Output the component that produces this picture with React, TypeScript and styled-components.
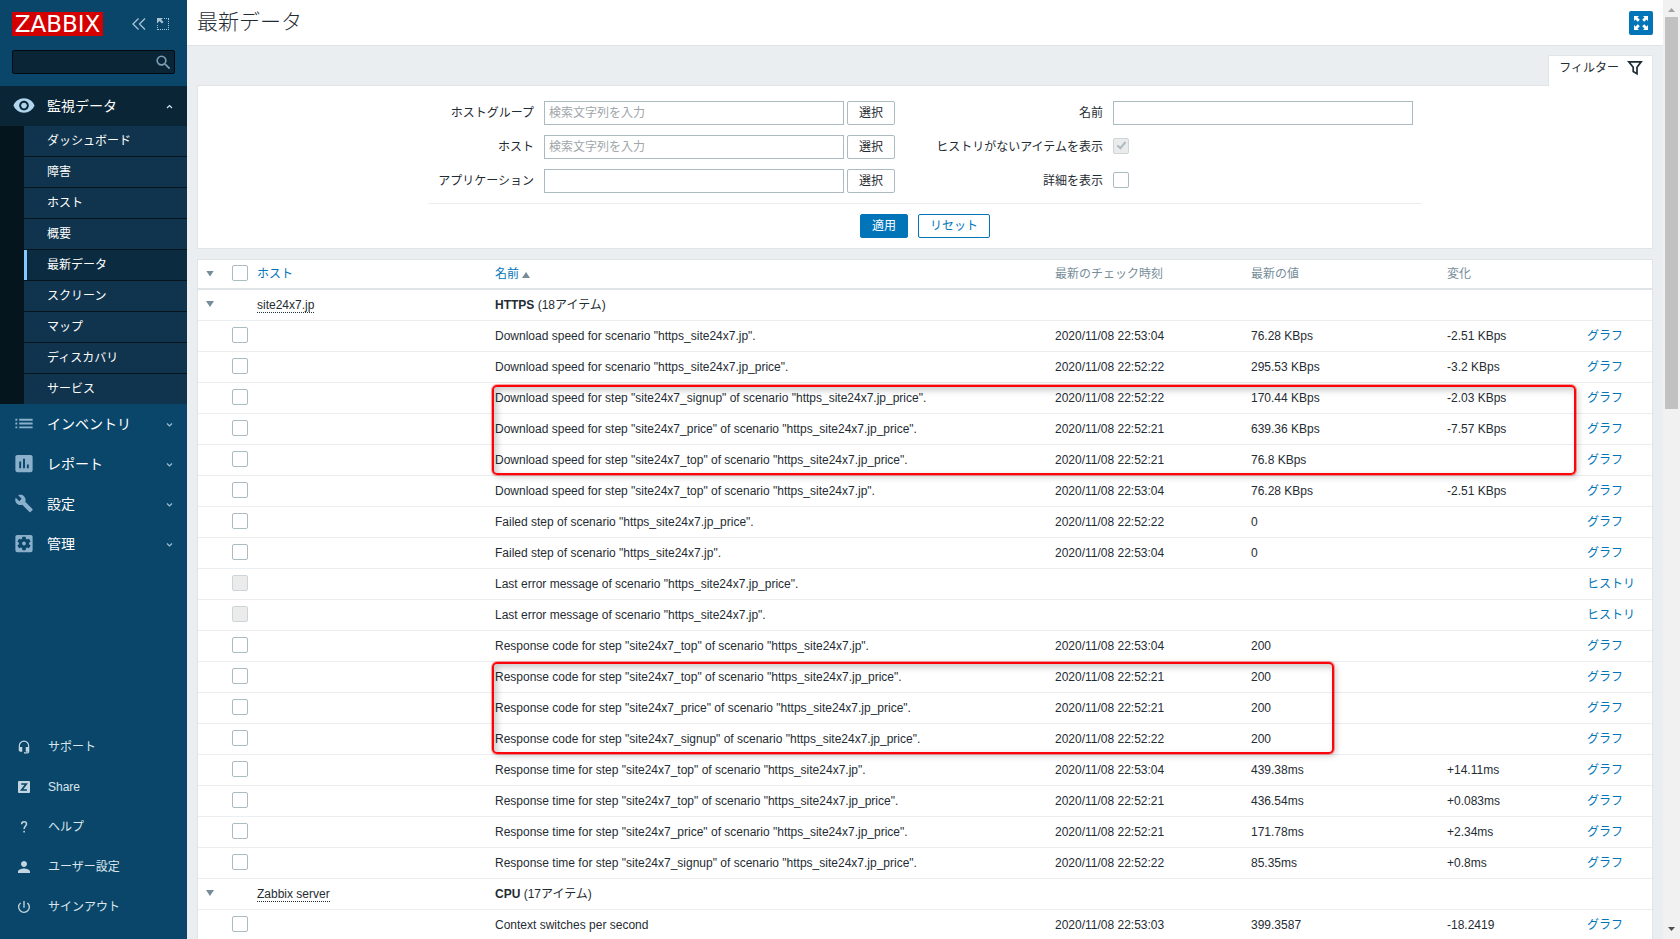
import React from 'react';
import styled, { createGlobalStyle, css } from 'styled-components';
import {
  MdVisibility,
  MdList,
  MdAssessment,
  MdBuild,
  MdSettingsApplications,
  MdHeadsetMic,
  MdPerson,
  MdPowerSettingsNew,
  MdSearch,
} from 'react-icons/md';

const GlobalStyle = createGlobalStyle`
  *, *::before, *::after { box-sizing: border-box; }
  body {
    margin: 0;
    background: #ebeef0;
    color: #1f2c33;
    font-family: "Liberation Sans", Arial, "Noto Sans CJK JP", sans-serif;
    font-size: 12px;
    line-height: 16px;
  }
  button, input { font: inherit; color: inherit; }
  a { color: #0275b8; text-decoration: none; }
  ul { list-style: none; margin: 0; padding: 0; }
`;

const Shell = styled.div`
  display: flex;
  height: 100vh;
  overflow: hidden;
`;

/* ---------- sidebar ---------- */

const Sidebar = styled.aside`
  flex: none;
  width: 187px;
  display: flex;
  flex-direction: column;
  background: #0a466a;
`;

const SidebarHead = styled.div`
  display: flex;
  align-items: center;
  padding: 12px 18px 14px 12px;
`;

const Logo = styled.a`
  width: 91px;
  height: 24px;
  margin-right: auto;
  background: #d40000;
  color: #fff;
  font-family: "DejaVu Sans", sans-serif;
  font-size: 23px;
  line-height: 24px;
  text-align: center;
  white-space: nowrap;
`;

const HeadButton = styled.button`
  display: flex;
  padding: 0;
  margin-left: 11px;
  border: 0;
  background: none;
  color: #a9c4d5;
`;

const SearchForm = styled.form`
  display: flex;
  align-items: center;
  height: 24px;
  margin: 0 12px 12px;
  border: 1px solid #020b11;
  border-radius: 2px;
  background: #0a2536;
  input {
    flex: 1;
    min-width: 0;
    border: 0;
    background: none;
    outline: none;
    color: #fff;
  }
  button {
    display: flex;
    padding: 0 1px;
    border: 0;
    background: none;
    color: #7d9fb4;
  }
`;

const MenuLink = styled.a<{ $open?: boolean }>`
  display: flex;
  align-items: center;
  height: 40px;
  padding: 0 14px 0 12px;
  color: #fff;
  font-size: 14px;
  line-height: 20px;
  background: ${(p) => (p.$open ? '#0a2536' : 'transparent')};
  > svg:first-child {
    width: 24px;
    margin-right: 11px;
    padding-bottom: 1px;
    color: ${(p) => (p.$open ? '#b0d5ee' : '#8bb0cc')};
  }
  > svg:last-child {
    margin-left: auto;
    color: ${(p) => (p.$open ? '#d4e4ee' : '#9fbfd3')};
  }
`;

const SubMenu = styled.ul`
  padding-left: 24px;
  background: #04151e;
  li + li { border-top: 1px solid #04151e; }
`;

const SubLink = styled.a<{ $active?: boolean }>`
  display: block;
  height: 30px;
  padding-left: ${(p) => (p.$active ? '20px' : '23px')};
  color: #fff;
  line-height: 31px;
  background: #10344d;
  ${(p) => p.$active && css`
    border-left: 3px solid #83c9ff;
    background: #0b2c40;
  `}
`;

const FooterMenu = styled.ul`
  margin-top: auto;
  padding-bottom: 12px;
`;

const FooterLink = styled.a`
  display: flex;
  align-items: center;
  height: 40px;
  padding-left: 15px;
  gap: 15px;
  color: #dbe6ed;
`;

const FooterIcon = styled.span`
  display: flex;
  justify-content: center;
  width: 18px;
  color: #c3d5e0;
`;

/* ---------- page ---------- */

const Page = styled.main`
  flex: 1;
  min-width: 0;
  overflow: hidden;
`;

const PageHead = styled.header`
  display: flex;
  justify-content: space-between;
  align-items: center;
  height: 46px;
  padding: 0 10px;
  background: #fff;
  border-bottom: 1px solid #dfe4e7;
`;

const Title = styled.h1`
  margin: 0;
  padding-bottom: 2px;
  font-size: 21px;
  line-height: 24px;
  font-weight: 300;
`;

const KioskButton = styled.button`
  display: flex;
  align-items: center;
  justify-content: center;
  width: 24px;
  height: 24px;
  padding: 0;
  border: 0;
  border-radius: 2px;
  background: #0275b8;
`;

const Content = styled.div`
  padding: 9px 10px 0;
`;

const TabBar = styled.div`
  display: flex;
  justify-content: flex-end;
`;

const FilterTab = styled.a`
  position: relative;
  z-index: 1;
  display: flex;
  gap: 8px;
  height: 31px;
  margin-bottom: -1px;
  padding: 4px 9px 0 10px;
  border: 1px solid #dfe4e7;
  border-bottom: 0;
  background: #fff;
  color: #1f2c33;
`;

const FilterPanel = styled.form`
  display: flex;
  flex-direction: column;
  align-items: center;
  margin-bottom: 10px;
  padding: 15px 0 10px;
  border: 1px solid #dfe4e7;
  background: #fff;
`;

const FilterFields = styled.div`
  display: flex;
  gap: 40px;
  padding: 0 9px 10px 10px;
  border-bottom: 1px solid #ebeef0;
`;

const FieldColumn = styled.div<{ $label: number }>`
  display: grid;
  grid-template-columns: ${(p) => p.$label}px auto;
  grid-auto-rows: 24px;
  gap: 10px;
  align-items: center;
  > label { text-align: right; white-space: nowrap; }
`;

const FieldControl = styled.div`
  display: flex;
  gap: 3px;
`;

const TextInput = styled.input`
  width: 300px;
  height: 24px;
  padding: 0 4px;
  border: 1px solid #acbbc2;
  border-radius: 0;
  background: #fff;
  outline: none;
  &::placeholder { color: #a0a6a9; opacity: 1; }
`;

const Button = styled.button<{ $kind: 'plain' | 'primary' | 'outline' }>`
  height: 24px;
  min-width: 48px;
  padding: 0 11px;
  border: 1px solid;
  border-radius: 2px;
  white-space: nowrap;
  ${(p) => p.$kind === 'plain' && css`
    width: 48px; padding: 0; border-color: #acbbc2; background: #fff; color: #1f2c33;
  `}
  ${(p) => p.$kind === 'primary' && css`
    border-color: #0275b8; background: #0275b8; color: #fff;
  `}
  ${(p) => p.$kind === 'outline' && css`
    border-color: #0275b8; background: #fff; color: #0275b8;
  `}
`;

const FilterActions = styled.div`
  display: flex;
  gap: 10px;
  margin-top: 10px;
`;

const Checkbox = styled.input.attrs({ type: 'checkbox' })`
  appearance: none;
  display: block;
  width: 16px;
  height: 16px;
  margin: 0 0 2px;
  border: 1px solid #acbbc2;
  border-radius: 2px;
  background: #fff;
  &:disabled { background: #ebebeb; border-color: #ccd5d9; }
  &:checked::after {
    content: '';
    display: block;
    width: 5px;
    height: 9px;
    margin: 1px auto 0;
    border: solid #acbbc2;
    border-width: 0 2px 2px 0;
    transform: rotate(40deg);
  }
`;

const TableWrap = styled.div`
  position: relative;
  border: 1px solid #dfe4e7;
  background: #fff;
`;

const DataTable = styled.table`
  width: 100%;
  table-layout: fixed;
  border-collapse: separate;
  border-spacing: 0;
  th, td {
    padding: 0 5px;
    text-align: left;
    font-weight: 400;
    white-space: nowrap;
    vertical-align: middle;
  }
  th {
    height: 30px;
    padding-bottom: 1px;
    border-bottom: 2px solid #dfe4e7;
    color: #768d99;
  }
  td {
    height: 31px;
    border-bottom: 1px solid #ebeef0;
  }
  th:first-child, td:first-child { padding-left: 8px; }
`;

const Col = styled.col<{ $w?: number }>`
  width: ${(p) => (p.$w ? `${p.$w}px` : 'auto')};
`;

const Toggle = styled.button`
  display: block;
  width: 8px;
  height: 6px;
  padding: 0;
  margin: 0;
  border: 0;
  background: #768d99;
  clip-path: polygon(0 0, 100% 0, 50% 100%);
  td > & { margin-bottom: 2px; }
`;

const SortUp = styled.span`
  display: inline-block;
  margin-left: 3px;
  border: solid transparent;
  border-width: 0 4px 6px;
  border-bottom-color: #768d99;
`;

const HostLink = styled.a`
  border-bottom: 1px dotted #1f2c33;
  color: #1f2c33;
`;

const Highlight = styled.div<{ $top: number; $right: number; $height: number }>`
  position: absolute;
  left: 294px;
  top: ${(p) => p.$top}px;
  right: ${(p) => p.$right}px;
  height: ${(p) => p.$height}px;
  border: 2px solid #fa0509;
  border-radius: 5px;
  box-shadow:
    0 0 0 1px rgba(250, 5, 9, 0.35),
    2px 2px 6px rgba(0, 0, 0, 0.2),
    inset 3px 3px 7px rgba(0, 0, 0, 0.22);
  pointer-events: none;
`;

/* ---------- window scroll bar ---------- */

const ScrollTrack = styled.div`
  flex: none;
  width: 17px;
  display: flex;
  flex-direction: column;
  align-items: center;
  padding: 8px 0;
  background: #f1f1f1;
`;

const ScrollThumb = styled.div`
  width: 13px;
  height: 42.5%;
  margin: 5px 0 auto;
  background: #c1c1c1;
`;

/* ---------- icons ---------- */

const Chevron = ({ up }: { up?: boolean }) => (
  <svg width="7" height="5" viewBox="0 0 7 5" fill="none" stroke="currentColor" strokeWidth="1.2">
    <path d={up ? 'M1 4 3.500 1.500 6 4' : 'M1 1.500 3.500 4 6 1.500'} />
  </svg>
);

const CollapseIcon = () => (
  <svg width="14" height="12" viewBox="0 0 14 12" fill="none" stroke="currentColor" strokeWidth="1.3">
    <path d="M6.5.5 1 6l5.500 5.500M13 .5 7.500 6 13 11.500" />
  </svg>
);

const CompactIcon = () => (
  <svg width="12" height="12" viewBox="0 0 12 12" fill="currentColor">
    <path d="M0 0h6L4.200 1.800 6.500 4.100 5 5.500 2.500 3.100 0 5.500z" />
    <path d="M7 .5h5M11.500 1v11M.5 7v5M1 11.500h11" fill="none" stroke="currentColor" strokeDasharray="1 1" />
  </svg>
);

const ShareIcon = () => (
  <svg width="12" height="12" viewBox="0 0 12 12">
    <rect width="12" height="12" rx="1" fill="currentColor" />
    <path d="M3.200 3h5L3.700 9h5.200" fill="none" stroke="#0a466a" strokeWidth="1.700" />
  </svg>
);

const HelpIcon = () => (
  <svg width="14" height="14" viewBox="0 0 14 14" fill="none" stroke="currentColor" strokeWidth="1.500">
    <path d="M4.600 4.200C4.700 2.600 5.700 1.700 7.100 1.700c1.500 0 2.400.9 2.400 2.200 0 2-2.400 2.200-2.400 5.100M7.100 10.800v1.700" />
  </svg>
);

const KioskIcon = () => (
  <svg width="14" height="14" viewBox="0 0 14 14" fill="#fff">
    {[0, 90, 180, 270].map((angle) => (
      <path key={angle} transform={`rotate(${angle} 7 7)`} d="M0 0h5L3.500 1.500 5.800 3.800 3.800 5.800 1.500 3.500 0 5z" />
    ))}
  </svg>
);

const FunnelIcon = () => (
  <svg width="16" height="16" viewBox="0 0 16 16" fill="none" stroke="#1f2c33" strokeWidth="1.700">
    <path d="M1.800 1.800h12.400L10 7.300v6.500L6.200 11.500V7.300z" />
  </svg>
);

/* ---------- data ---------- */

const subMenu = ['ダッシュボード', '障害', 'ホスト', '概要', '最新データ', 'スクリーン', 'マップ', 'ディスカバリ', 'サービス'];

const mainMenu = [
  { label: 'インベントリ', icon: <MdList size={24} /> },
  { label: 'レポート', icon: <MdAssessment size={24} /> },
  { label: '設定', icon: <MdBuild size={20} /> },
  { label: '管理', icon: <MdSettingsApplications size={24} /> },
];

const footerMenu = [
  { label: 'サポート', icon: <MdHeadsetMic size={14} /> },
  { label: 'Share', icon: <ShareIcon /> },
  { label: 'ヘルプ', icon: <HelpIcon /> },
  { label: 'ユーザー設定', icon: <MdPerson size={18} /> },
  { label: 'サインアウト', icon: <MdPowerSettingsNew size={16} /> },
];

type Item = { name: string; time?: string; value?: string; change?: string; history?: boolean };
type Group = { host: string; app: string; count: string; items: Item[] };

const groups: Group[] = [
  {
    host: 'site24x7.jp',
    app: 'HTTPS',
    count: '(18アイテム)',
    items: [
      { name: 'Download speed for scenario "https_site24x7.jp".', time: '22:53:04', value: '76.28 KBps', change: '-2.51 KBps' },
      { name: 'Download speed for scenario "https_site24x7.jp_price".', time: '22:52:22', value: '295.53 KBps', change: '-3.2 KBps' },
      { name: 'Download speed for step "site24x7_signup" of scenario "https_site24x7.jp_price".', time: '22:52:22', value: '170.44 KBps', change: '-2.03 KBps' },
      { name: 'Download speed for step "site24x7_price" of scenario "https_site24x7.jp_price".', time: '22:52:21', value: '639.36 KBps', change: '-7.57 KBps' },
      { name: 'Download speed for step "site24x7_top" of scenario "https_site24x7.jp_price".', time: '22:52:21', value: '76.8 KBps' },
      { name: 'Download speed for step "site24x7_top" of scenario "https_site24x7.jp".', time: '22:53:04', value: '76.28 KBps', change: '-2.51 KBps' },
      { name: 'Failed step of scenario "https_site24x7.jp_price".', time: '22:52:22', value: '0' },
      { name: 'Failed step of scenario "https_site24x7.jp".', time: '22:53:04', value: '0' },
      { name: 'Last error message of scenario "https_site24x7.jp_price".', history: true },
      { name: 'Last error message of scenario "https_site24x7.jp".', history: true },
      { name: 'Response code for step "site24x7_top" of scenario "https_site24x7.jp".', time: '22:53:04', value: '200' },
      { name: 'Response code for step "site24x7_top" of scenario "https_site24x7.jp_price".', time: '22:52:21', value: '200' },
      { name: 'Response code for step "site24x7_price" of scenario "https_site24x7.jp_price".', time: '22:52:21', value: '200' },
      { name: 'Response code for step "site24x7_signup" of scenario "https_site24x7.jp_price".', time: '22:52:22', value: '200' },
      { name: 'Response time for step "site24x7_top" of scenario "https_site24x7.jp".', time: '22:53:04', value: '439.38ms', change: '+14.11ms' },
      { name: 'Response time for step "site24x7_top" of scenario "https_site24x7.jp_price".', time: '22:52:21', value: '436.54ms', change: '+0.083ms' },
      { name: 'Response time for step "site24x7_price" of scenario "https_site24x7.jp_price".', time: '22:52:21', value: '171.78ms', change: '+2.34ms' },
      { name: 'Response time for step "site24x7_signup" of scenario "https_site24x7.jp_price".', time: '22:52:22', value: '85.35ms', change: '+0.8ms' },
    ],
  },
  {
    host: 'Zabbix server',
    app: 'CPU',
    count: '(17アイテム)',
    items: [{ name: 'Context switches per second', time: '22:53:03', value: '399.3587', change: '-18.2419' }],
  },
];

export default function App() {
  return (
    <>
      <GlobalStyle />
      <Shell>
        <Sidebar>
          <SidebarHead>
            <Logo href="#">ZABBIX</Logo>
            <HeadButton type="button" aria-label="Hide sidebar"><CollapseIcon /></HeadButton>
            <HeadButton type="button" aria-label="Compact sidebar"><CompactIcon /></HeadButton>
          </SidebarHead>
          <SearchForm>
            <input type="text" aria-label="Search" />
            <button type="button" aria-label="Search"><MdSearch size={19} /></button>
          </SearchForm>
          <nav>
            <MenuLink href="#" $open>
              <MdVisibility size={24} />
              監視データ
              <Chevron up />
            </MenuLink>
            <SubMenu>
              {subMenu.map((label) => (
                <li key={label}><SubLink href="#" $active={label === '最新データ'}>{label}</SubLink></li>
              ))}
            </SubMenu>
            {mainMenu.map(({ label, icon }) => (
              <MenuLink href="#" key={label}>
                {icon}
                {label}
                <Chevron />
              </MenuLink>
            ))}
          </nav>
          <FooterMenu>
            {footerMenu.map(({ label, icon }) => (
              <li key={label}><FooterLink href="#"><FooterIcon>{icon}</FooterIcon>{label}</FooterLink></li>
            ))}
          </FooterMenu>
        </Sidebar>

        <Page>
          <PageHead>
            <Title>最新データ</Title>
            <KioskButton type="button" aria-label="Kiosk mode"><KioskIcon /></KioskButton>
          </PageHead>
          <Content>
            <TabBar>
              <FilterTab href="#">フィルター<FunnelIcon /></FilterTab>
            </TabBar>
            <FilterPanel>
              <FilterFields>
                <FieldColumn $label={96}>
                  <label htmlFor="hostgroup">ホストグループ</label>
                  <FieldControl>
                    <TextInput id="hostgroup" placeholder="検索文字列を入力" />
                    <Button type="button" $kind="plain">選択</Button>
                  </FieldControl>
                  <label htmlFor="host">ホスト</label>
                  <FieldControl>
                    <TextInput id="host" placeholder="検索文字列を入力" />
                    <Button type="button" $kind="plain">選択</Button>
                  </FieldControl>
                  <label htmlFor="application">アプリケーション</label>
                  <FieldControl>
                    <TextInput id="application" />
                    <Button type="button" $kind="plain">選択</Button>
                  </FieldControl>
                </FieldColumn>
                <FieldColumn $label={168}>
                  <label htmlFor="name">名前</label>
                  <TextInput id="name" />
                  <label htmlFor="without-data">ヒストリがないアイテムを表示</label>
                  <Checkbox id="without-data" defaultChecked disabled />
                  <label htmlFor="details">詳細を表示</label>
                  <Checkbox id="details" />
                </FieldColumn>
              </FilterFields>
              <FilterActions>
                <Button type="button" $kind="primary">適用</Button>
                <Button type="button" $kind="outline">リセット</Button>
              </FilterActions>
            </FilterPanel>

            <TableWrap>
              <DataTable>
                <colgroup>
                  <Col $w={29} />
                  <Col $w={25} />
                  <Col $w={238} />
                  <Col />
                  <Col $w={196} />
                  <Col $w={196} />
                  <Col $w={140} />
                  <Col $w={70} />
                </colgroup>
                <thead>
                  <tr>
                    <th><Toggle type="button" aria-label="Collapse all" /></th>
                    <th><Checkbox aria-label="Select all" /></th>
                    <th><a href="#">ホスト</a></th>
                    <th><a href="#">名前<SortUp /></a></th>
                    <th>最新のチェック時刻</th>
                    <th>最新の値</th>
                    <th>変化</th>
                    <th />
                  </tr>
                </thead>
                <tbody>
                  {groups.map((group) => (
                    <React.Fragment key={group.host}>
                      <tr>
                        <td><Toggle type="button" aria-label={`Collapse ${group.host}`} /></td>
                        <td />
                        <td><HostLink href="#">{group.host}</HostLink></td>
                        <td colSpan={5}><b>{group.app}</b> {group.count}</td>
                      </tr>
                      {group.items.map((item) => (
                        <tr key={item.name}>
                          <td />
                          <td><Checkbox aria-label={item.name} disabled={item.history} /></td>
                          <td />
                          <td>{item.name}</td>
                          <td>{item.time && `2020/11/08 ${item.time}`}</td>
                          <td>{item.value}</td>
                          <td>{item.change}</td>
                          <td><a href="#">{item.history ? 'ヒストリ' : 'グラフ'}</a></td>
                        </tr>
                      ))}
                    </React.Fragment>
                  ))}
                </tbody>
              </DataTable>
              <Highlight $top={125} $right={76} $height={90} />
              <Highlight $top={402} $right={318} $height={92} />
            </TableWrap>
          </Content>
        </Page>

        <ScrollTrack>
          <svg width="7" height="4" viewBox="0 0 7 4" fill="#a3a3a3"><path d="M0 4 3.500 0 7 4z" /></svg>
          <ScrollThumb />
          <svg width="7" height="4" viewBox="0 0 7 4" fill="#505050"><path d="M0 0h7L3.500 4z" /></svg>
        </ScrollTrack>
      </Shell>
    </>
  );
}
